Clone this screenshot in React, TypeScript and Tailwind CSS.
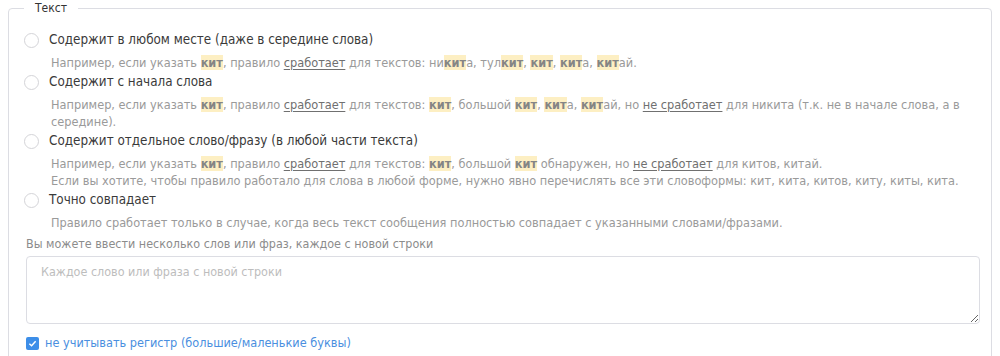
import React from "react";

const K = ({ children }: { children: React.ReactNode }) => (
  <span className="bg-[#fdefc3] font-bold text-[#858585]">{children}</span>
);
const U = ({ children }: { children: React.ReactNode }) => (
  <span className="underline text-[#707070] underline-offset-2">{children}</span>
);

const Radio = ({ label }: { label: string }) => (
  <label className="flex items-center h-[21px]">
    <span className="w-[15px] h-[15px] rounded-full border border-[#d4d4d8] bg-white shrink-0 ml-[-2px]" />
    <span className="ml-[10px] text-[13.35px] text-[#3a3a3a]">{label}</span>
  </label>
);

const Desc = ({ children }: { children: React.ReactNode }) => (
  <div className="pl-[25px] text-[12.65px] leading-[17px] text-[#9a9a9a] pt-[3px] pb-[1px]">{children}</div>
);

export default function App() {
  return (
    <div className="bg-white w-[1000px] h-[356px] overflow-hidden" style={{ fontFamily: "'DejaVu Sans Condensed', 'DejaVu Sans', sans-serif" }}>
      <fieldset className="mx-2 border border-[#dcdde3] rounded-[4px] pl-[17px] pr-[11px] pb-4 h-[400px]">
        <legend className="ml-[-2px] px-[11px] text-[12px] leading-[16px] text-[#333]">Текст</legend>
        <div className="pt-[14px] flex flex-col">
          <Radio label="Содержит в любом месте (даже в середине слова)" />
          <Desc>
            Например, если указать <K>кит</K>, правило <U>сработает</U> для текстов: ни<K>кит</K>а, тул<K>кит</K>, <K>кит</K>, <K>кит</K>а, <K>кит</K>ай.
          </Desc>
          <Radio label="Содержит с начала слова" />
          <Desc>
            Например, если указать <K>кит</K>, правило <U>сработает</U> для текстов: <K>кит</K>, большой <K>кит</K>, <K>кит</K>а, <K>кит</K>ай, но <U>не сработает</U> для никита (т.к. не в начале слова, а в середине).
          </Desc>
          <Radio label="Содержит отдельное слово/фразу (в любой части текста)" />
          <Desc>
            Например, если указать <K>кит</K>, правило <U>сработает</U> для текстов: <K>кит</K>, большой <K>кит</K> обнаружен, но <U>не сработает</U> для китов, китай.
            <br />
            Если вы хотите, чтобы правило работало для слова в любой форме, нужно явно перечислять все эти словоформы: кит, кита, китов, киту, киты, кита.
          </Desc>
          <Radio label="Точно совпадает" />
          <Desc>
            Правило сработает только в случае, когда весь текст сообщения полностью совпадает с указанными словами/фразами.
          </Desc>
          <div className="text-[12.45px] leading-[17px] text-[#8c8c8c] mt-[3px]">
            Вы можете ввести несколько слов или фраз, каждое с новой строки
          </div>
          <textarea
            className="mt-[4px] h-[68px] w-full border border-[#dcdde3] rounded-[4px] px-[14px] py-[6px] text-[12.45px] placeholder:text-[#bdbdbd] outline-none resize-y block"
            placeholder="Каждое слово или фраза с новой строки"
          />
          <label className="flex items-center h-[17px] mt-[11px]">
            <span className="w-[13px] h-[13px] rounded-[2px] bg-[#3d8ee8] flex items-center justify-center">
              <svg width="9" height="9" viewBox="0 0 10 10">
                <path d="M1.5 5.2 L4 7.5 L8.5 2.5" stroke="white" strokeWidth="1.6" fill="none" />
              </svg>
            </span>
            <span className="ml-[6px] text-[12.6px] text-[#4a8fe0]">не учитывать регистр (большие/маленькие буквы)</span>
          </label>
        </div>
      </fieldset>
    </div>
  );
}
